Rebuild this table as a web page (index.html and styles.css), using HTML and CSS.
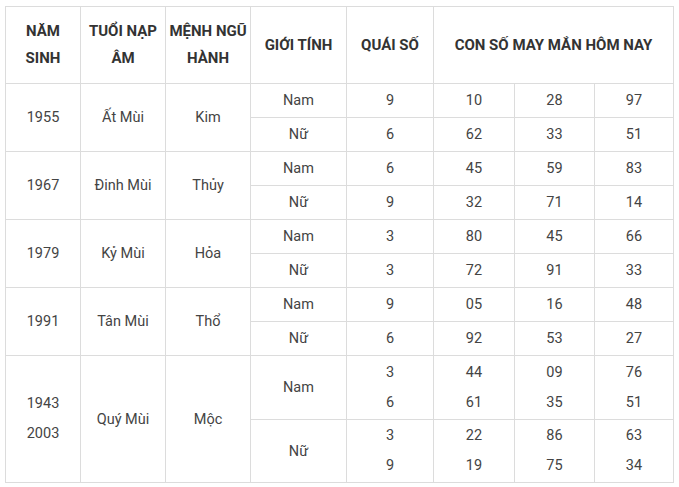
FILE: index.html
```html
<!DOCTYPE html>
<html lang="vi">
<head>
<meta charset="utf-8">
<link rel="stylesheet" href="styles.css">
</head>
<body>
<table class="lucky">
  <colgroup>
    <col class="c1"><col class="c2"><col class="c3"><col class="c4"><col class="c5"><col class="c6"><col class="c7"><col class="c8">
  </colgroup>
  <thead>
    <tr class="head">
      <th>NĂM<br>SINH</th>
      <th>TUỔI NẠP<br>ÂM</th>
      <th>MỆNH NGŨ<br>HÀNH</th>
      <th>GIỚI TÍNH</th>
      <th>QUÁI SỐ</th>
      <th colspan="3">CON SỐ MAY MẮN HÔM NAY</th>
    </tr>
  </thead>
  <tbody>
    <tr class="r"><td rowspan="2">1955</td><td rowspan="2">Ất Mùi</td><td rowspan="2">Kim</td><td>Nam</td><td>9</td><td>10</td><td>28</td><td>97</td></tr>
    <tr class="r"><td>Nữ</td><td>6</td><td>62</td><td>33</td><td>51</td></tr>
    <tr class="r"><td rowspan="2">1967</td><td rowspan="2">Đinh Mùi</td><td rowspan="2">Thủy</td><td>Nam</td><td>6</td><td>45</td><td>59</td><td>83</td></tr>
    <tr class="r"><td>Nữ</td><td>9</td><td>32</td><td>71</td><td>14</td></tr>
    <tr class="r"><td rowspan="2">1979</td><td rowspan="2">Kỷ Mùi</td><td rowspan="2">Hỏa</td><td>Nam</td><td>3</td><td>80</td><td>45</td><td>66</td></tr>
    <tr class="r"><td>Nữ</td><td>3</td><td>72</td><td>91</td><td>33</td></tr>
    <tr class="r"><td rowspan="2">1991</td><td rowspan="2">Tân Mùi</td><td rowspan="2">Thổ</td><td>Nam</td><td>9</td><td>05</td><td>16</td><td>48</td></tr>
    <tr class="r"><td>Nữ</td><td>6</td><td>92</td><td>53</td><td>27</td></tr>
    <tr class="big"><td rowspan="2" class="tall">1943<br>2003</td><td rowspan="2">Quý Mùi</td><td rowspan="2">Mộc</td><td>Nam</td><td class="tall">3<br>6</td><td class="tall">44<br>61</td><td class="tall">09<br>35</td><td class="tall">76<br>51</td></tr>
    <tr class="big2"><td>Nữ</td><td class="tall">3<br>9</td><td class="tall">22<br>19</td><td class="tall">86<br>75</td><td class="tall">63<br>34</td></tr>
  </tbody>
</table>
</body>
</html>
```
FILE: styles.css
```css
html, body {
  margin: 0;
  padding: 0;
  background: #fff;
}
body {
  padding: 6px 0 0 5px;
  font-family: Roboto, "Liberation Sans", sans-serif;
}
.lucky {
  border-collapse: collapse;
  table-layout: fixed;
  width: 669px;
  color: #444;
  font-size: 14.5px;
}
.c1 { width: 75px; }
.c2 { width: 85px; }
.c3 { width: 85px; }
.c4 { width: 96px; }
.c5 { width: 87px; }
.c6 { width: 81px; }
.c7 { width: 80px; }
.c8 { width: 79px; }
.lucky th,
.lucky td {
  border: 1px solid #dcdcdc;
  padding: 0;
  text-align: center;
  vertical-align: middle;
}
.lucky th {
  font-weight: 700;
  font-size: 15px;
  color: #333;
  line-height: 27px;
}
.head { height: 77px; }
.r { height: 34px; }
.big { height: 64px; }
.big2 { height: 63px; }
.tall { line-height: 30px; }
```
